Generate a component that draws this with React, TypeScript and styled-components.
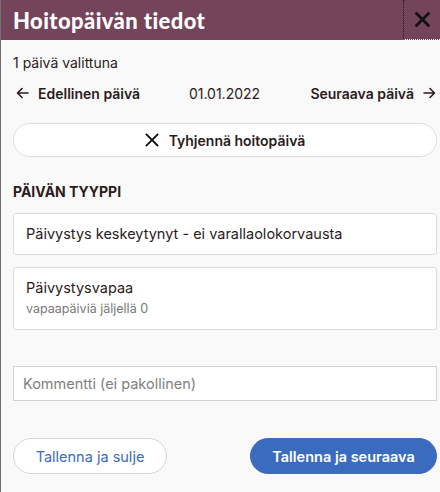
import React from "react";
import styled, { createGlobalStyle } from "styled-components";

const GlobalStyle = createGlobalStyle`
  html, body {
    margin: 0;
    padding: 0;
    background: #f9f9f9;
  }
  * {
    box-sizing: border-box;
  }
`;

const Panel = styled.div`
  width: 440px;
  height: 492px;
  display: flex;
  flex-direction: column;
  background: #f9f9f9;
  border-left: 1px solid #6f6f6f;
  font-family: Inter, "Noto Sans", sans-serif;
  color: #2b1c1c;
  overflow: hidden;
`;

const Header = styled.header`
  height: 40px;
  display: flex;
  align-items: stretch;
  background: #74445a;
`;

const Title = styled.h1`
  flex: 1;
  margin: 0;
  padding: 0 0 0 12px;
  display: flex;
  align-items: center;
  font-family: Lato, "Noto Sans", sans-serif;
  font-weight: 900;
  font-size: 22px;
  color: #fff;
  letter-spacing: 0.4px;
`;

const CloseButton = styled.button`
  width: 37px;
  border: none;
  border-left: 1px dotted #2a1520;
  border-bottom: 1px dotted #fff;
  background: transparent;
  display: flex;
  align-items: center;
  justify-content: center;
  padding: 0;
`;

const Body = styled.div`
  flex: 1;
  display: flex;
  flex-direction: column;
  padding: 14px 4px 0 12px;
`;

const Info = styled.div`
  font-size: 14px;
  line-height: 18px;
`;

const NavRow = styled.div`
  display: grid;
  grid-template-columns: 1fr auto 1fr;
  align-items: center;
  margin-top: 11px;
  height: 20px;
  font-size: 14px;
`;

const NavLink = styled.span<{ $right?: boolean }>`
  display: flex;
  align-items: center;
  gap: 9px;
  font-weight: 600;
  justify-content: ${(p) => (p.$right ? "flex-end" : "flex-start")};
  padding-left: ${(p) => (p.$right ? "0" : "3px")};
`;

const DateText = styled.span`
  font-size: 14px;
`;

const ClearButton = styled.button`
  margin-top: 20px;
  height: 34px;
  width: 424px;
  border: 1px solid #dedede;
  border-radius: 17px;
  background: #fff;
  display: flex;
  align-items: center;
  justify-content: center;
  gap: 10px;
  font-family: inherit;
  font-size: 14px;
  font-weight: 600;
  color: #2b1c1c;
`;

const SectionTitle = styled.h2`
  margin: 26px 0 0;
  font-size: 14px;
  font-weight: 700;
  line-height: 18px;
`;

const Option = styled.div<{ $tall?: boolean }>`
  width: 424px;
  height: ${(p) => (p.$tall ? "63px" : "42px")};
  margin-top: 12px;
  border: 1px solid #dcdcdc;
  border-radius: 3px;
  background: #fff;
  padding: ${(p) => (p.$tall ? "10px 12px" : "0 12px")};
  display: flex;
  flex-direction: column;
  justify-content: ${(p) => (p.$tall ? "flex-start" : "center")};
`;

const OptionLabel = styled.div`
  font-size: 14.5px;
  line-height: 20px;
`;

const OptionHint = styled.div`
  margin-top: 2px;
  font-size: 12.5px;
  line-height: 18px;
  color: #777;
`;

const CommentInput = styled.input`
  margin-top: 36px;
  width: 424px;
  height: 35px;
  border: 1px solid #d2d2d2;
  background: #fff;
  padding: 0 9px;
  font-family: inherit;
  font-size: 14.5px;
  color: #2b1c1c;
  &::placeholder {
    color: #808080;
  }
`;

const Actions = styled.div`
  margin-top: 37px;
  width: 424px;
  display: flex;
  justify-content: space-between;
`;

const PillButton = styled.button<{ $primary?: boolean }>`
  height: 36px;
  border-radius: 18px;
  padding: 0;
  white-space: nowrap;
  font-family: inherit;
  font-size: 14.5px;
  font-weight: ${(p) => (p.$primary ? 600 : 400)};
  border: 1px solid ${(p) => (p.$primary ? "#3a6bbe" : "#d6d6d6")};
  background: ${(p) => (p.$primary ? "#3a6bbe" : "#fff")};
  color: ${(p) => (p.$primary ? "#fff" : "#3a6bbe")};
  width: ${(p) => (p.$primary ? "187px" : "154px")};
`;

const XIcon = ({ size, stroke }: { size: number; stroke: number }) => (
  <svg width={size} height={size} viewBox="0 0 14 14">
    <path
      d="M1.5 1.5 L12.5 12.5 M12.5 1.5 L1.5 12.5"
      stroke="#111"
      strokeWidth={stroke}
      strokeLinecap="square"
      fill="none"
    />
  </svg>
);

const Arrow = ({ dir }: { dir: "left" | "right" }) => (
  <svg
    width="13"
    height="12"
    viewBox="0 0 13 12"
    style={{ transform: dir === "right" ? "scaleX(-1)" : undefined }}
  >
    <path
      d="M12 6 H1.5 M6 1.5 L1.5 6 L6 10.5"
      stroke="#2b1c1c"
      strokeWidth="1.6"
      fill="none"
      strokeLinecap="round"
      strokeLinejoin="round"
    />
  </svg>
);

export default function App() {
  return (
    <>
      <GlobalStyle />
      <Panel>
        <Header>
          <Title>Hoitopäivän tiedot</Title>
          <CloseButton aria-label="Sulje">
            <XIcon size={15} stroke={2.6} />
          </CloseButton>
        </Header>
        <Body>
          <Info>1 päivä valittuna</Info>
          <NavRow>
            <NavLink>
              <Arrow dir="left" />
              Edellinen päivä
            </NavLink>
            <DateText>01.01.2022</DateText>
            <NavLink $right>
              Seuraava päivä
              <Arrow dir="right" />
            </NavLink>
          </NavRow>
          <ClearButton>
            <XIcon size={14} stroke={1.8} />
            Tyhjennä hoitopäivä
          </ClearButton>
          <SectionTitle>PÄIVÄN TYYPPI</SectionTitle>
          <Option>
            <OptionLabel>Päivystys keskeytynyt - ei varallaolokorvausta</OptionLabel>
          </Option>
          <Option $tall>
            <OptionLabel>Päivystysvapaa</OptionLabel>
            <OptionHint>vapaapäiviä jäljellä 0</OptionHint>
          </Option>
          <CommentInput placeholder="Kommentti (ei pakollinen)" />
          <Actions>
            <PillButton>Tallenna ja sulje</PillButton>
            <PillButton $primary>Tallenna ja seuraava</PillButton>
          </Actions>
        </Body>
      </Panel>
    </>
  );
}
